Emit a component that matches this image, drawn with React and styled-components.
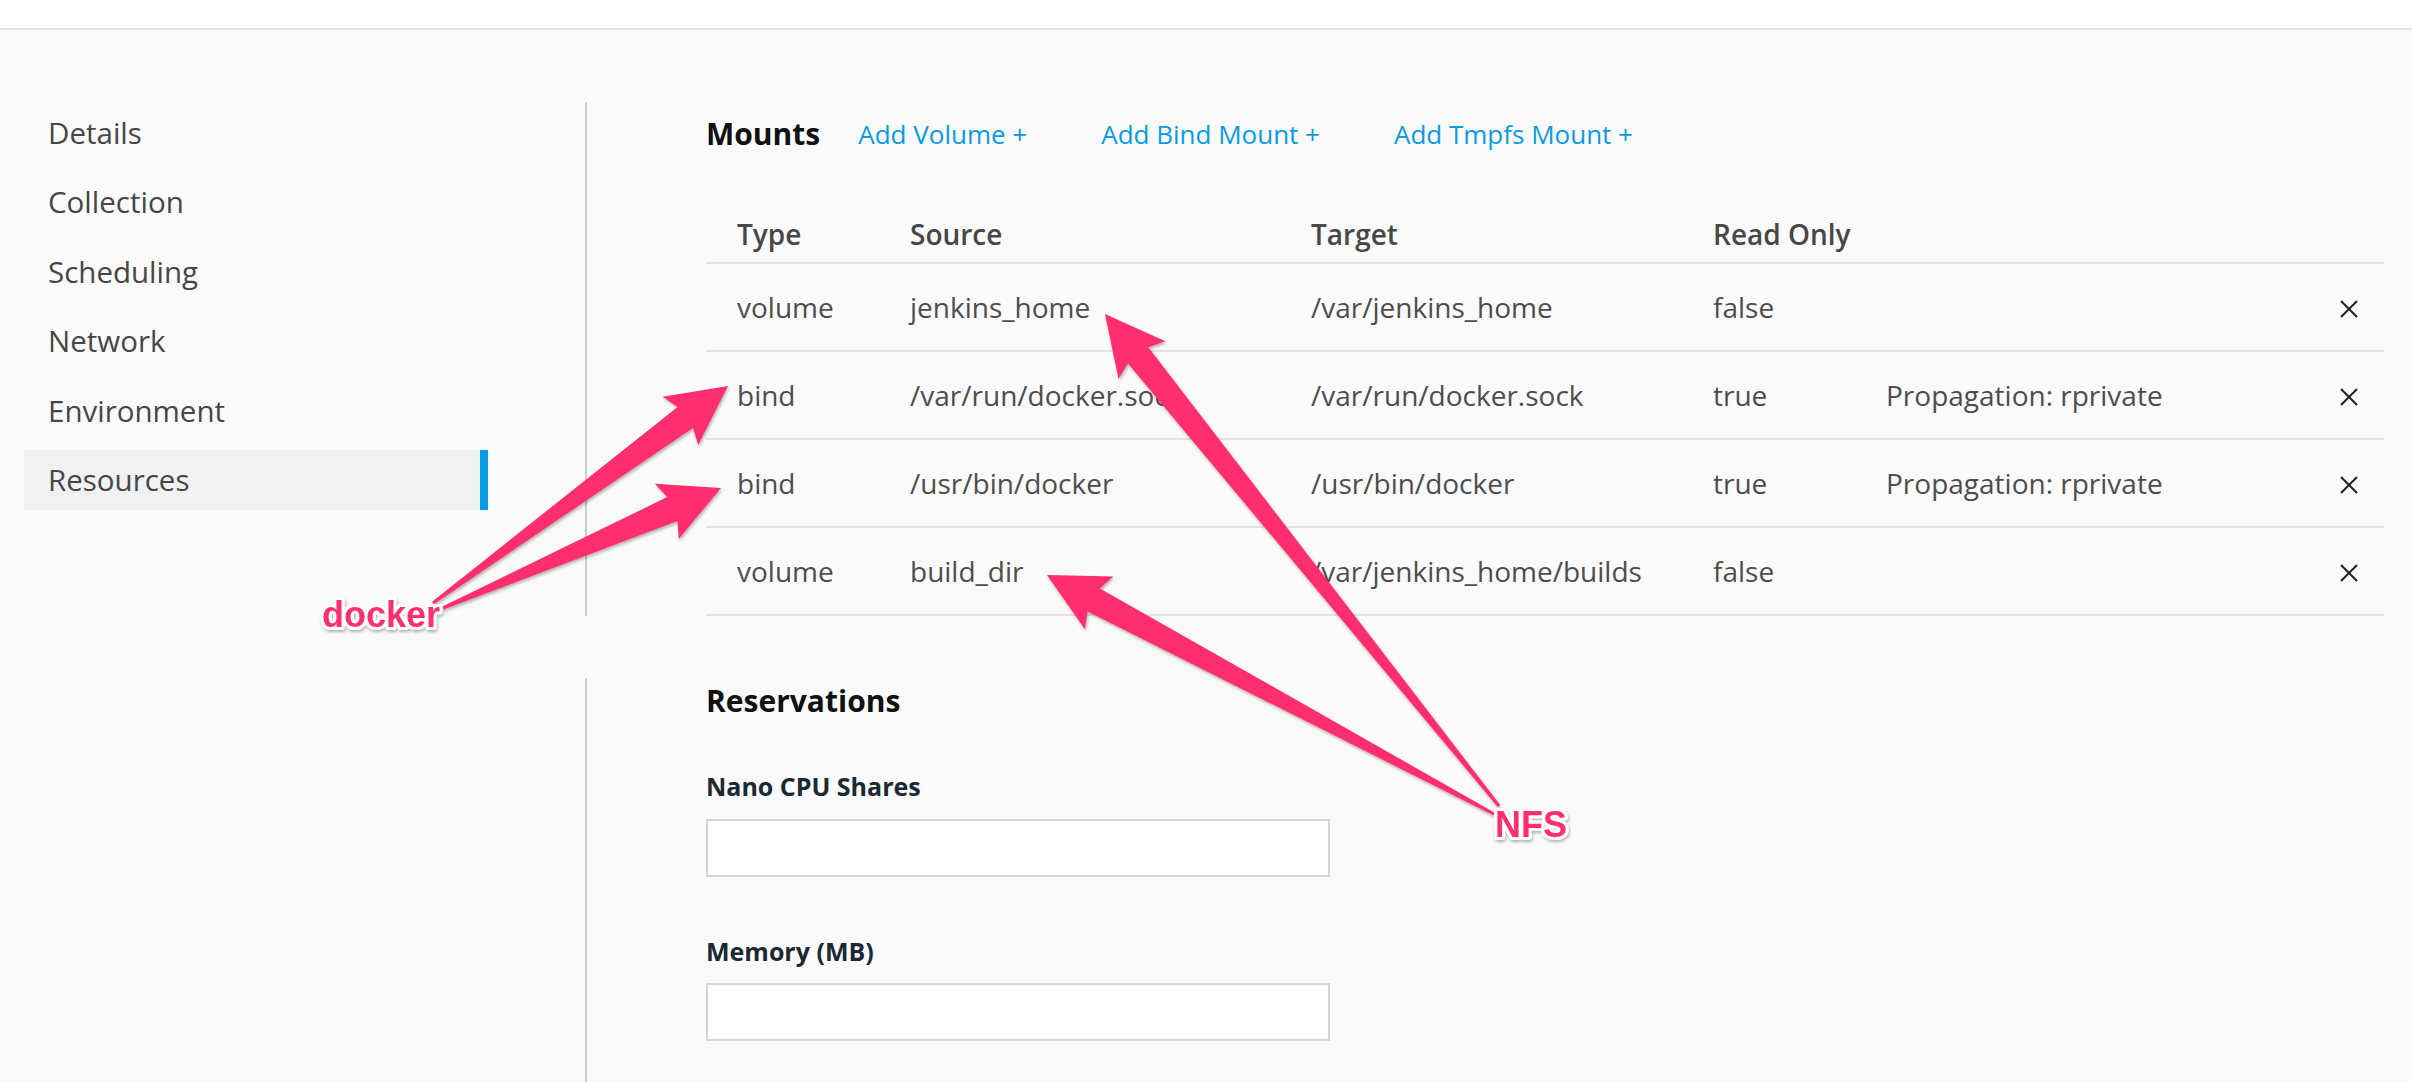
import React from "react";
import styled, { createGlobalStyle } from "styled-components";

const GlobalStyle = createGlobalStyle`
  html, body {
    margin: 0;
    padding: 0;
    background: #fafafa;
    font-family: "Open Sans", "Liberation Sans", sans-serif;
    overflow: hidden;
  }
  * { box-sizing: border-box; }
`;

const navItems = [
  "Details",
  "Collection",
  "Scheduling",
  "Network",
  "Environment",
  "Resources",
];

const mounts = [
  { type: "volume", source: "jenkins_home", target: "/var/jenkins_home", ro: "false", extra: "" },
  { type: "bind", source: "/var/run/docker.sock", target: "/var/run/docker.sock", ro: "true", extra: "Propagation: rprivate" },
  { type: "bind", source: "/usr/bin/docker", target: "/usr/bin/docker", ro: "true", extra: "Propagation: rprivate" },
  { type: "volume", source: "build_dir", target: "/var/jenkins_home/builds", ro: "false", extra: "" },
];

// annotation arrows: [tail, tip]
const arrows = [
  [[433, 603], [728, 386]],
  [[443, 608], [721, 488]],
  [[1499, 806], [1105, 314]],
  [[1494, 814], [1047, 575]],
];

function arrowPoints(tail, tip) {
  const dx = tip[0] - tail[0];
  const dy = tip[1] - tail[1];
  const len = Math.hypot(dx, dy);
  const ux = dx / len;
  const uy = dy / len;
  const nx = -uy;
  const ny = ux;
  const at = (back, w) => [tip[0] - ux * back + nx * w, tip[1] - uy * back + ny * w];
  return [
    tip,
    at(59, 30),
    at(53, 13),
    at(len, 1.5),
    at(len, -1.5),
    at(53, -13),
    at(59, -30),
  ]
    .map((p) => p.map((v) => v.toFixed(1)).join(","))
    .join(" ");
}

const Page = styled.div`
  position: relative;
  width: 2412px;
  height: 1082px;
  overflow: hidden;
`;

const TopBar = styled.div`
  height: 30px;
  background: #ffffff;
  border-bottom: 2px solid #dde2e8;
`;

const Layout = styled.div`
  display: flex;
  padding-top: 72px;
`;

const Sidebar = styled.nav`
  width: 585px;
  flex-shrink: 0;
  padding: 0 0 0 24px;
  display: flex;
  flex-direction: column;
  gap: 9.6px;
`;

const NavItem = styled.div`
  width: 464px;
  height: 60px;
  display: flex;
  align-items: center;
  padding-left: 24px;
  font-size: 29.5px;
  color: #464646;
  background: ${(p) => (p.$active ? "#f0f2f1" : "transparent")};
  border-right: 8px solid ${(p) => (p.$active ? "#0a9be6" : "transparent")};
`;

const Main = styled.main`
  flex: 1;
  padding-right: 28px;
  display: flex;
  flex-direction: column;
  gap: 62px;
`;

const Section = styled.section`
  border-left: 2px solid #c5cdd5;
  padding-left: 119px;
  padding-bottom: ${(p) => p.$bottom || 0}px;
`;

const HeadRow = styled.div`
  height: 64px;
  display: flex;
  align-items: center;
`;

const Title = styled.h2`
  margin: 0;
  font-size: 30px;
  font-weight: 700;
  color: #111111;
  line-height: ${(p) => p.$lh || 64}px;
`;

const Links = styled.div`
  display: flex;
  gap: 74px;
  margin-left: 38px;
`;

const AddLink = styled.a`
  font-size: 26px;
  color: #0a9be6;
  text-decoration: none;
  cursor: pointer;
`;

const Table = styled.div`
  margin-top: 44px;
`;

const Row = styled.div`
  display: grid;
  grid-template-columns: 173px 401px 402px 173px 1fr 70px;
  align-items: center;
  height: ${(p) => (p.$head ? 54 : 88)}px;
  padding-bottom: ${(p) => (p.$head ? 4 : 0)}px;
  border-bottom: 2px solid #e2e2e2;
`;

const Cell = styled.div`
  padding-left: 31px;
  font-size: 28px;
  font-weight: ${(p) => (p.$head ? 600 : 400)};
  color: ${(p) => (p.$head ? "#474747" : "#4d4d4d")};
  white-space: nowrap;
`;

const Remove = styled.button`
  justify-self: center;
  background: none;
  border: 0;
  padding: 0;
  margin-top: 4px;
  display: flex;
  cursor: pointer;
`;

const FieldLabel = styled.label`
  display: block;
  margin-top: ${(p) => p.$top}px;
  font-size: 25px;
  font-weight: 700;
  color: #1b2934;
  line-height: 40px;
`;

const Input = styled.input`
  display: block;
  margin-top: ${(p) => p.$top}px;
  width: 624px;
  height: 58px;
  border: 2px solid #d0d5d5;
  background: #ffffff;
  font-size: 26px;
  outline: none;
`;

const Overlay = styled.svg`
  position: absolute;
  left: 0;
  top: 0;
  pointer-events: none;
`;

const Note = styled.text`
  font-family: "Liberation Sans", Arial, sans-serif;
  font-weight: 700;
  font-size: 36px;
  fill: #ff2f6e;
  stroke: #ffffff;
  stroke-width: 6px;
  paint-order: stroke;
  stroke-linejoin: round;
`;

function CloseIcon() {
  return (
    <svg width="18" height="18" viewBox="0 0 18 18">
      <path d="M1 1 L17 17 M17 1 L1 17" stroke="#1f1f1f" strokeWidth="2" fill="none" />
    </svg>
  );
}

export default function App() {
  return (
    <Page>
      <GlobalStyle />
      <TopBar />
      <Layout>
        <Sidebar>
          {navItems.map((item) => (
            <NavItem key={item} $active={item === "Resources"}>
              {item}
            </NavItem>
          ))}
        </Sidebar>
        <Main>
          <Section>
            <HeadRow>
              <Title>Mounts</Title>
              <Links>
                <AddLink>Add Volume +</AddLink>
                <AddLink>Add Bind Mount +</AddLink>
                <AddLink>Add Tmpfs Mount +</AddLink>
              </Links>
            </HeadRow>
            <Table>
              <Row $head>
                <Cell $head>Type</Cell>
                <Cell $head>Source</Cell>
                <Cell $head>Target</Cell>
                <Cell $head>Read Only</Cell>
                <Cell />
                <span />
              </Row>
              {mounts.map((m, i) => (
                <Row key={i}>
                  <Cell>{m.type}</Cell>
                  <Cell>{m.source}</Cell>
                  <Cell>{m.target}</Cell>
                  <Cell>{m.ro}</Cell>
                  <Cell>{m.extra}</Cell>
                  <Remove aria-label="remove">
                    <CloseIcon />
                  </Remove>
                </Row>
              ))}
            </Table>
          </Section>
          <Section $bottom={120}>
            <Title $lh={46}>Reservations</Title>
            <FieldLabel $top={42}>Nano CPU Shares</FieldLabel>
            <Input $top={13} />
            <FieldLabel $top={54}>Memory (MB)</FieldLabel>
            <Input $top={12} />
          </Section>
        </Main>
      </Layout>
      <Overlay width="2412" height="1082" viewBox="0 0 2412 1082">
        <defs>
          <filter id="shadow" x="-10%" y="-10%" width="120%" height="120%">
            <feDropShadow dx="1" dy="2" stdDeviation="1.5" floodColor="#000" floodOpacity="0.3" />
          </filter>
        </defs>
        <g filter="url(#shadow)">
          {arrows.map(([tail, tip], i) => (
            <polygon key={i} points={arrowPoints(tail, tip)} fill="#ff2f6e" strokeLinejoin="round" />
          ))}
          <Note x="381" y="627" textAnchor="middle">docker</Note>
          <Note x="1531" y="837" textAnchor="middle">NFS</Note>
        </g>
      </Overlay>
    </Page>
  );
}
